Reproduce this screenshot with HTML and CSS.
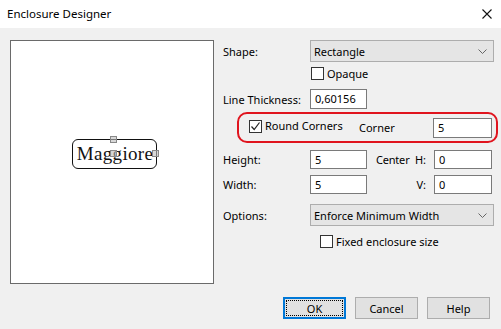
FILE: index.html
```html
<!DOCTYPE html>
<html lang="en">
<head>
    <meta charset="UTF-8">
    <title>Enclosure Designer</title>
    <link rel="stylesheet" href="styles.css">
</head>
<body>
    <div class="dialog">
        <div class="titlebar">
            <span class="title">Enclosure Designer</span>
            <svg class="close" width="10" height="10" viewBox="0 0 10 10">
                <path d="M0.5 0.5 L9.5 9.5 M9.5 0.5 L0.5 9.5" stroke="#111" stroke-width="1.1" fill="none"/>
            </svg>
        </div>

        <div class="main">
            <div class="preview">
                <div class="enclosure">
                    <span class="enclosure-text">Maggiore</span>
                    <span class="handle handle-top"></span>
                    <span class="handle handle-mid"></span>
                    <span class="handle handle-right"></span>
                </div>
            </div>

            <div class="form">
                <div class="row row-shape">
                    <label class="lbl">Shape:</label>
                    <div class="combo combo-wide">
                        <span>Rectangle</span>
                        <svg class="chevron" width="9" height="5" viewBox="0 0 9 5"><path d="M0.5 0.5 L4.5 4.5 L8.5 0.5" stroke="#666" fill="none"/></svg>
                    </div>
                </div>

                <div class="row row-check">
                    <span class="lbl"></span>
                    <span class="check"></span>
                    <span class="check-text">Opaque</span>
                </div>

                <div class="row row-thick">
                    <label class="lbl">Line Thickness:</label>
                    <div class="textbox tb-small">0,60156</div>
                </div>

                <div class="highlight">
                    <span class="check checked">
                        <svg width="11" height="11" viewBox="0 0 11 11"><path d="M1.5 5.5 L4.2 8.5 L9.5 1.5" stroke="#222" stroke-width="1.2" fill="none"/></svg>
                    </span>
                    <span class="check-text round-text">Round Corners</span>
                    <span class="corner-lbl">Corner</span>
                    <div class="textbox tb-corner">5</div>
                </div>

                <div class="row row-height">
                    <label class="lbl">Height:</label>
                    <div class="textbox tb-small">5</div>
                    <div class="mid">
                        <span class="center-lbl">Center</span>
                        <span class="axis">H:</span>
                    </div>
                    <div class="textbox tb-center">0</div>
                </div>

                <div class="row row-width">
                    <label class="lbl">Width:</label>
                    <div class="textbox tb-small">5</div>
                    <div class="mid">
                        <span class="axis">V:</span>
                    </div>
                    <div class="textbox tb-center">0</div>
                </div>

                <div class="row row-options">
                    <label class="lbl">Options:</label>
                    <div class="combo combo-wide">
                        <span>Enforce Minimum Width</span>
                        <svg class="chevron" width="9" height="5" viewBox="0 0 9 5"><path d="M0.5 0.5 L4.5 4.5 L8.5 0.5" stroke="#666" fill="none"/></svg>
                    </div>
                </div>

                <div class="row row-fixed">
                    <span class="lbl lbl-fixed"></span>
                    <span class="check"></span>
                    <span class="check-text">Fixed enclosure size</span>
                </div>
            </div>
        </div>

        <div class="footer">
            <button class="btn btn-default"><span class="focus">OK</span></button>
            <button class="btn">Cancel</button>
            <button class="btn">Help</button>
        </div>
    </div>
</body>
</html>
```

FILE: styles.css
```css
html, body {
    margin: 0;
    padding: 0;
}
body {
    width: 501px;
    height: 329px;
    overflow: hidden;
    background: #f0f0f0;
    font-family: "Noto Sans", "Open Sans", sans-serif;
    font-size: 11px;
    color: #000;
}
.dialog {
    width: 501px;
    height: 329px;
    display: flex;
    flex-direction: column;
}
.titlebar {
    height: 28px;
    background: #fff;
    display: flex;
    align-items: center;
    justify-content: space-between;
    padding: 0 9px 0 7px;
    box-sizing: border-box;
}
.title {
    font-size: 11.5px;
    margin-top: -1px;
}
.close {
    margin-top: -1px;
}
.main {
    display: flex;
    padding: 12px 0 0 10px;
}
.preview {
    width: 204px;
    height: 244px;
    box-sizing: border-box;
    border: 1px solid #6a6a6a;
    background: #fff;
    display: flex;
    align-items: center;
    justify-content: center;
    padding: 0 0 16px 5px;
}
.enclosure {
    position: relative;
    width: 85px;
    height: 30px;
    box-sizing: border-box;
    border: 1px solid #111;
    border-radius: 6px;
    display: flex;
    align-items: center;
    justify-content: center;
}
.enclosure-text {
    font-family: "Liberation Serif", "DejaVu Serif", serif;
    font-size: 19px;
    letter-spacing: 0.3px;
    color: #111;
    margin-left: 1px;
}
.handle {
    position: absolute;
    width: 7px;
    height: 7px;
    box-sizing: border-box;
    border: 1px solid #888;
    background: rgba(190, 190, 190, 0.6);
}
.handle-top {
    left: 37px;
    top: -4px;
}
.handle-mid {
    left: 37px;
    top: 10px;
}
.handle-right {
    left: 79px;
    top: 10px;
}
.form {
    margin-left: 9px;
    width: 275px;
}
.row {
    display: flex;
    align-items: center;
}
.lbl {
    width: 87px;
    flex: none;
}
.combo {
    height: 22px;
    box-sizing: border-box;
    border: 1px solid #adadad;
    background: #e5e5e5;
    display: flex;
    align-items: center;
    justify-content: space-between;
    padding: 0 6px 0 3px;
}
.combo-wide {
    width: 184px;
}
.textbox {
    box-sizing: border-box;
    border: 1px solid #7a7a7a;
    background: #fff;
    height: 20px;
    line-height: 18px;
    padding-left: 4px;
}
.tb-small {
    width: 57px;
}
.tb-center {
    width: 58px;
    height: 19px;
    line-height: 17px;
}
.tb-corner {
    width: 59px;
    margin-left: auto;
}
.check {
    width: 13px;
    height: 13px;
    box-sizing: border-box;
    border: 1px solid #333;
    background: #fff;
    display: flex;
    align-items: center;
    justify-content: center;
    flex: none;
}
.check-text {
    margin-left: 3px;
}
.row-shape {
    height: 22px;
}
.row-check {
    margin-top: 5px;
    height: 13px;
}
.row-check .lbl {
    width: 88px;
}
.row-thick {
    margin-top: 9px;
    height: 20px;
}
.highlight {
    margin: 3px 0 0 14px;
    width: 261px;
    height: 31px;
    box-sizing: border-box;
    border: 2px solid #e0141e;
    border-radius: 10px;
    display: flex;
    align-items: center;
    padding: 0 4px 0 10px;
}
.highlight .check {
    margin-top: -2px;
}
.round-text {
    margin-top: -4px;
    width: 94px;
    flex: none;
}
.row-height {
    margin-top: 7px;
    height: 19px;
}
.row-height .tb-small,
.row-width .tb-small {
    height: 19px;
    line-height: 17px;
}
.row-width {
    margin-top: 6px;
    height: 19px;
}
.mid {
    width: 67px;
    box-sizing: border-box;
    padding: 0 8px 0 9px;
    display: flex;
}
.center-lbl {
    letter-spacing: -0.2px;
}
.axis {
    margin-left: auto;
}
.row-options {
    margin-top: 10px;
    height: 22px;
}
.row-fixed {
    margin-top: 9px;
    height: 13px;
}
.lbl-fixed {
    width: 97px;
}
.footer {
    margin-top: auto;
    display: flex;
    justify-content: flex-end;
    gap: 9px;
    padding: 0 11px 10px 0;
}
.btn {
    width: 63px;
    height: 22px;
    box-sizing: border-box;
    border: 1px solid #adadad;
    background: #e1e1e1;
    font-family: "Noto Sans", "Open Sans", sans-serif;
    font-size: 11px;
    color: #000;
    padding: 0;
    margin: 0;
}
.btn-default {
    border: 2px solid #0078d7;
    display: flex;
    padding: 1px;
}
.focus {
    flex: 1;
    border: 1px dotted #000;
    display: flex;
    align-items: center;
    justify-content: center;
}
```
